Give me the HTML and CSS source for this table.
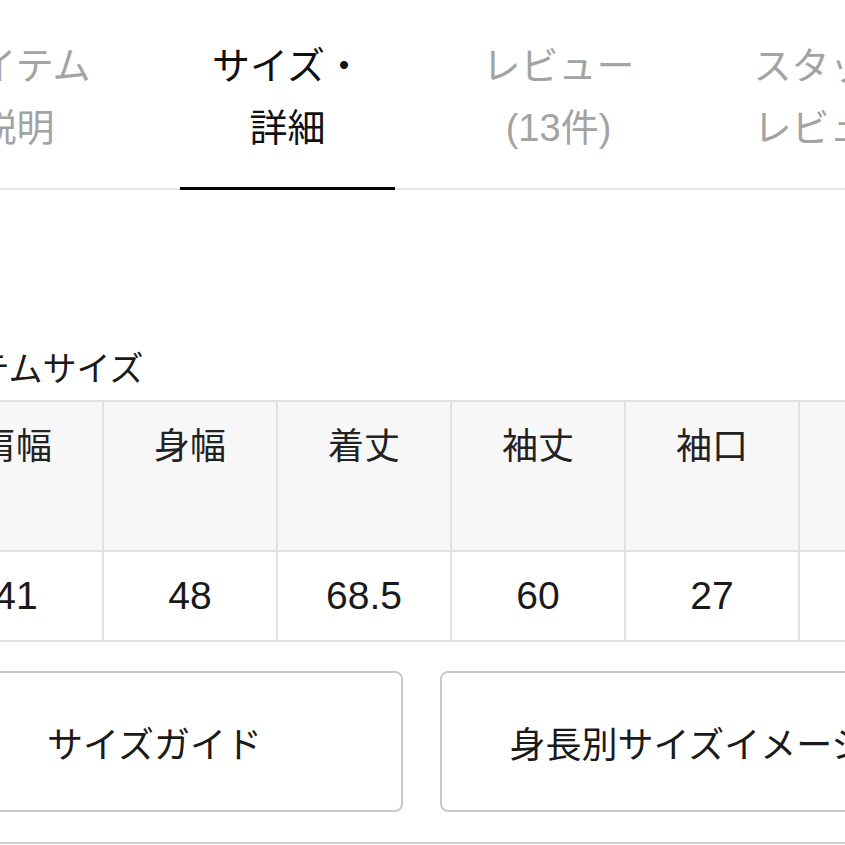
FILE: index.html
```html
<!DOCTYPE html>
<html lang="ja">
<head>
<meta charset="utf-8">
<title>サイズ・詳細</title>
<link rel="stylesheet" href="styles.css">
</head>
<body>
<div class="page">
  <nav class="tabs">
    <div class="tab"><span class="tab-label">アイテム<br>説明</span></div>
    <div class="tab"><span class="tab-label active">サイズ・<br>詳細</span></div>
    <div class="tab"><span class="tab-label">レビュー<br>(13件)</span></div>
    <div class="tab"><span class="tab-label">スタッフ<br>レビュー</span></div>
  </nav>
  <section class="size">
    <h2 class="title">アイテムサイズ</h2>
    <div class="table">
      <div class="cell head">肩幅</div>
      <div class="cell head">身幅</div>
      <div class="cell head">着丈</div>
      <div class="cell head">袖丈</div>
      <div class="cell head">袖口</div>
      <div class="cell head"></div>
      <div class="cell num">41</div>
      <div class="cell num">48</div>
      <div class="cell num">68.5</div>
      <div class="cell num">60</div>
      <div class="cell num">27</div>
      <div class="cell num"></div>
    </div>
    <div class="buttons">
      <div class="btn">サイズガイド</div>
      <div class="btn">身長別サイズイメージ</div>
    </div>
  </section>
  <div class="rule"></div>
</div>
</body>
</html>
```
FILE: styles.css
```css
html, body {
  margin: 0;
  padding: 0;
  background: #fff;
}
body {
  width: 845px;
  height: 845px;
  overflow: hidden;
  font-family: "Liberation Sans", "Noto Sans CJK JP", sans-serif;
  color: #1a1a1a;
}
.page {
  width: 1300px;
  margin-left: -119px;
}
.tabs {
  display: flex;
  border-bottom: 2px solid #e6e6e6;
}
.tab {
  width: 271px;
  padding: 0 28px;
  box-sizing: border-box;
  display: flex;
  flex: none;
}
.tab-label {
  display: block;
  width: 100%;
  text-align: center;
  font-size: 38px;
  line-height: 62px;
  padding: 35px 0 28px;
  color: #a3a3a3;
  white-space: nowrap;
}
.tab-label.active {
  color: #111;
  border-bottom: 3px solid #000;
  margin-bottom: -2px;
}
.size {
  padding-left: 49px;
}
.title {
  margin: 158px 0 0 -20px;
  font-size: 34px;
  line-height: 42px;
  font-weight: normal;
  color: #1a1a1a;
}
.table {
  margin-top: 10px;
  display: grid;
  grid-template-columns: repeat(6, 174px);
  border-top: 2px solid #e2e2e2;
}
.cell {
  box-sizing: border-box;
  border-right: 2px solid #e2e2e2;
  border-bottom: 2px solid #e2e2e2;
  text-align: center;
}
.head {
  height: 150px;
  background: #f7f7f7;
  font-size: 36px;
  line-height: 50px;
  padding-top: 20px;
  color: #222;
}
.num {
  height: 90px;
  font-size: 39px;
  line-height: 88px;
  color: #1a1a1a;
}
.buttons {
  margin: 29px 0 0 -24px;
  display: flex;
  gap: 37px;
}
.btn {
  width: 497px;
  height: 141px;
  box-sizing: border-box;
  border: 2px solid #c9c9c9;
  border-radius: 8px;
  display: flex;
  align-items: center;
  justify-content: center;
  font-size: 36px;
  color: #1a1a1a;
  white-space: nowrap;
  flex: none;
}
.rule {
  margin-top: 30px;
  height: 2px;
  background: #cccccc;
}
```
